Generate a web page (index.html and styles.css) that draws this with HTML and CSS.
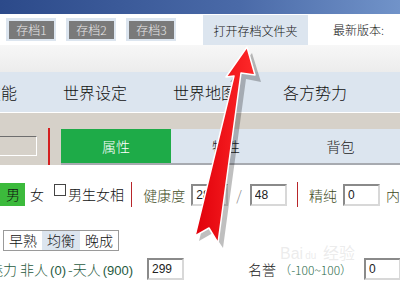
FILE: index.html
```html
<!DOCTYPE html>
<html lang="zh-CN">
<head>
  <meta charset="UTF-8">
  <title>存档管理</title>
  <link rel="stylesheet" href="styles.css">
</head>
<body>
  <div class="page">
    <div class="topbar"></div>

    <div class="toolbar">
      <span class="save-btn"><span>存档1</span></span>
      <span class="save-btn"><span>存档2</span></span>
      <span class="save-btn"><span>存档3</span></span>
      <span class="open-folder">打开存档文件夹</span>
      <span class="version">最新版本:</span>
    </div>

    <div class="band"></div>

    <nav class="nav">
      <span class="nav-item">人物技能</span>
      <span class="nav-item">世界设定</span>
      <span class="nav-item">世界地图</span>
      <span class="nav-item">各方势力</span>
      <span class="nav-item">指南</span>
    </nav>

    <div class="tabbar">
      <div class="search-box"></div>
      <div class="divider"></div>
      <div class="tabs">
        <div class="tab active">属性</div>
        <div class="tab">特性</div>
        <div class="tab">背包</div>
      </div>
    </div>

    <div class="content">
      <div class="row">
        <span class="gender active">男</span>
        <span class="gender">女</span>
        <label class="check"><span class="box"></span>男生女相</label>
        <span class="sep"></span>
        <span class="label">健康度</span>
        <input class="field" type="text" value="28">
        <span class="slash">/</span>
        <input class="field" type="text" value="48">
        <span class="sep sep-after-field"></span>
        <span class="label">精纯</span>
        <input class="field" type="text" value="0">
        <span class="label">内</span>
      </div>

      <div class="row">
        <div class="segment">
          <span>早熟</span>
          <span class="on">均衡</span>
          <span>晚成</span>
        </div>
      </div>

      <div class="row row-charm">
        <span class="label">魅力 非人<small>(0)</small>-天人<small>(900)</small></span>
        <input class="field" type="text" value="299">
        <span class="fame">名誉 <span class="range">（-100~100）</span></span>
        <input class="field" type="text" value="0">
      </div>
    </div>

    <div class="watermark">Bai<span class="paw">du</span> 经验</div>

    <svg class="arrow" width="400" height="300" viewBox="0 0 400 300">
      <defs>
        <linearGradient id="red" x1="0" y1="0" x2="1" y2="0">
          <stop offset="0" stop-color="#e0000a"/>
          <stop offset="1" stop-color="#ff2a2a"/>
        </linearGradient>
      </defs>
      <polygon points="249,50 258,79 243,76 220,245 210,230 196,238 236,78 227,79"
               fill="#000" opacity="0.25" transform="translate(3,3)"/>
      <polygon points="247,47 255,75 241,73 218,243 209,228 195,236 234,76 226,77"
               fill="url(#red)" stroke="#fff" stroke-width="1.5" stroke-linejoin="round"/>
    </svg>
  </div>
</body>
</html>
```

FILE: styles.css
```css
body {
  margin: 0;
  font-family: "Noto Sans CJK SC", "Liberation Sans", sans-serif;
  font-weight: 300;
  background: #fff;
}
.page {
  position: relative;
  width: 400px;
  height: 300px;
  overflow: hidden;
}
.topbar {
  height: 14px;
  background: linear-gradient(to right, #2c4a8a, #4a6aa8 60%, #7193c9);
}
.toolbar {
  height: 31px;
  display: flex;
  align-items: center;
  padding-left: 6px;
  font-size: 12px;
}
.save-btn {
  background: #dce5ef;
  padding: 3px 2px 2px 3px;
  margin-right: 10px;
}
.save-btn span {
  display: block;
  width: 45px;
  height: 18px;
  line-height: 18px;
  background: #7a7a7a;
  color: #e8e8e8;
  text-align: center;
}
.open-folder {
  margin-left: 17px;
  align-self: stretch;
  width: 105px;
  margin-top: 1px;
  background: #dce5ef;
  color: #111;
  display: flex;
  align-items: center;
  justify-content: center;
}
.version {
  margin-left: 25px;
  color: #111;
}
.band {
  height: 27px;
  background: linear-gradient(#f7f7f7, #ececec);
}
.nav {
  height: 40px;
  display: flex;
  align-items: center;
  margin-left: -70px;
  background: #dce5ef;
  border-bottom: 1px solid #fff;
  font-size: 16px;
  color: #111;
}
.nav-item {
  flex: 0 0 110px;
  text-align: center;
  white-space: nowrap;
}
.tabbar {
  height: 52px;
  display: flex;
  align-items: flex-end;
  background: #d6d1c9;
}
.search-box {
  width: 45px;
  height: 18px;
  margin-left: -10px;
  margin-bottom: 9px;
  border-top: 1px solid #6e6e6e;
  border-left: 1px solid #6e6e6e;
  border-right: 1px solid #fff;
  border-bottom: 1px solid #fff;
}
.divider {
  width: 2px;
  height: 37px;
  margin-left: 11px;
  background: #d42020;
}
.tabs {
  display: flex;
  margin-left: 11px;
  flex: 1;
  border-bottom: 2px solid #a7aab0;
}
.tab {
  width: 110px;
  height: 34px;
  line-height: 34px;
  text-align: center;
  background: #dce5ef;
  color: #222;
  font-size: 14px;
}
.tab:last-child {
  flex: 1;
}
.tab.active {
  background: #1eab48;
  color: #fff;
}
.content {
  font-size: 14px;
  color: #111;
}
.row {
  display: flex;
  align-items: center;
  height: 25px;
  margin-top: 17px;
  white-space: nowrap;
}
.gender {
  padding: 1px 5px 2px 5px;
}
.gender.active {
  background: #3cba3c;
  color: #111;
  padding-left: 6px;
}
.check {
  display: flex;
  align-items: flex-start;
  height: 22px;
  margin-left: 5px;
}
.box {
  width: 10px;
  height: 10px;
  margin-right: 2px;
  border: 1px solid #444;
  background: #fff;
}
.sep {
  width: 2px;
  height: 25px;
  margin: 0 12px 0 7px;
  background: #b8262a;
}
.sep-after-field {
  margin-left: 4px;
}
.label {
  color: #3d4a22;
}
.field {
  width: 27px;
  height: 16px;
  margin: 0 6px;
  padding: 1px 3px;
  border: 2px solid #8a8a8a;
  border-right-color: #d8d8d8;
  border-bottom-color: #d8d8d8;
  font-family: "Liberation Sans", sans-serif;
  font-size: 12px;
  color: #222;
}
.slash {
  color: #888;
  margin: 0 2px;
}
.row + .row {
  margin-top: 21px;
}
.segment {
  display: flex;
  margin-left: 3px;
  border: 1px solid #9a9a9a;
  height: 19px;
  align-items: center;
}
.segment span {
  padding: 0 5px;
  line-height: 19px;
}
.segment .on {
  background: #dce5ef;
}
.row.row-charm {
  margin-top: 3px;
  margin-left: -11px;
}
.row-charm .label {
  color: #1f5a40;
}
.row-charm .field {
  margin-left: 12px;
}
small {
  font-family: "Liberation Sans", sans-serif;
  font-size: 13px;
  margin: 0 2px;
}
.fame {
  margin-left: 58px;
  color: #222;
}
.range {
  color: #2a6a4a;
  font-size: 12px;
  margin-right: 0;
}
.watermark {
  position: absolute;
  left: 280px;
  top: 240px;
  font-family: "Liberation Sans", sans-serif;
  font-size: 16px;
  color: rgba(200, 200, 200, 0.35);
}
.paw {
  font-size: 10px;
  margin: 0 2px;
}
.arrow {
  position: absolute;
  left: 0;
  top: 0;
  pointer-events: none;
}
```
